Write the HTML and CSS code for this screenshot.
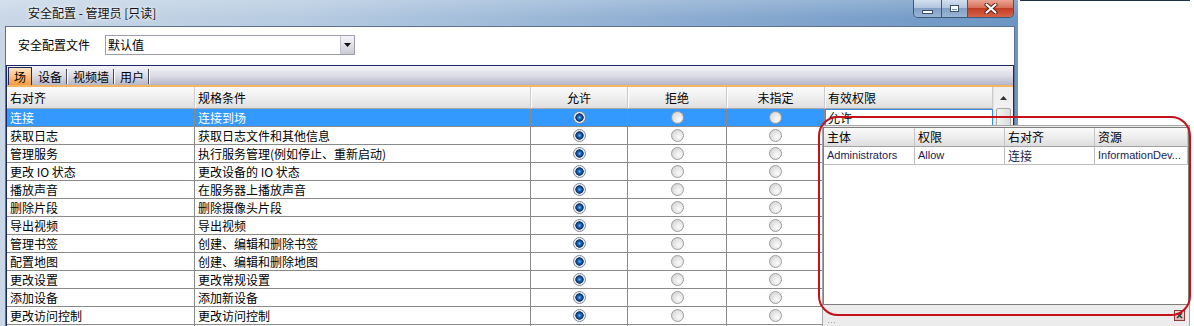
FILE: index.html
```html
<!DOCTYPE html>
<html lang="zh-CN">
<head>
<meta charset="utf-8">
<title>安全配置 - 管理员 [只读]</title>
<link rel="stylesheet" href="styles.css">
</head>
<body>
<div class="window">
  <div class="titlebar">
    <span class="title">安全配置 - 管理员 [只读]</span>
    <div class="caption">
      <div class="cbtn min"><span class="min-glyph"></span></div>
      <div class="cbtn max"><span class="max-glyph"></span></div>
      <div class="cbtn close">
        <svg width="14" height="11" viewBox="0 0 14 11"><path d="M2.5 1.5 L11.5 9.5 M11.5 1.5 L2.5 9.5" stroke="#5a1d12" stroke-width="4" stroke-linecap="round"/><path d="M2.5 1.5 L11.5 9.5 M11.5 1.5 L2.5 9.5" stroke="#ffffff" stroke-width="2.2" stroke-linecap="round"/></svg>
      </div>
    </div>
  </div>
  <div class="client">
    <div class="profile-row">
      <span class="label">安全配置文件</span>
      <div class="combo">
        <span class="combo-text">默认值</span>
        <span class="combo-btn"><svg width="7" height="4" viewBox="0 0 7 4"><path d="M0 0 H7 L3.5 4 Z" fill="#111"/></svg></span>
      </div>
    </div>
    <div class="tabctl">
      <div class="tabstrip">
        <span class="tab active">场</span>
        <span class="tab">设备</span>
        <span class="tab">视频墙</span>
        <span class="tab">用户</span>
      </div>
      <div class="tablebox">
        <div class="grid">
          <div class="row head">
            <div class="cell">右对齐</div>
            <div class="cell">规格条件</div>
            <div class="cell c">允许</div>
            <div class="cell c">拒绝</div>
            <div class="cell c">未指定</div>
            <div class="cell">有效权限</div>
          </div>
          <div class="row sel">
            <div class="cell">连接</div><div class="cell">连接到场</div>
            <div class="cell r"><span class="radio on"></span></div><div class="cell r"><span class="radio"></span></div><div class="cell r"><span class="radio"></span></div>
            <div class="cell eff">允许</div>
          </div>
          <div class="row">
            <div class="cell">获取日志</div><div class="cell">获取日志文件和其他信息</div>
            <div class="cell r"><span class="radio on"></span></div><div class="cell r"><span class="radio"></span></div><div class="cell r"><span class="radio"></span></div>
            <div class="cell"></div>
          </div>
          <div class="row">
            <div class="cell">管理服务</div><div class="cell">执行服务管理(例如停止、重新启动)</div>
            <div class="cell r"><span class="radio on"></span></div><div class="cell r"><span class="radio"></span></div><div class="cell r"><span class="radio"></span></div>
            <div class="cell"></div>
          </div>
          <div class="row">
            <div class="cell">更改 IO 状态</div><div class="cell">更改设备的 IO 状态</div>
            <div class="cell r"><span class="radio on"></span></div><div class="cell r"><span class="radio"></span></div><div class="cell r"><span class="radio"></span></div>
            <div class="cell"></div>
          </div>
          <div class="row">
            <div class="cell">播放声音</div><div class="cell">在服务器上播放声音</div>
            <div class="cell r"><span class="radio on"></span></div><div class="cell r"><span class="radio"></span></div><div class="cell r"><span class="radio"></span></div>
            <div class="cell"></div>
          </div>
          <div class="row">
            <div class="cell">删除片段</div><div class="cell">删除摄像头片段</div>
            <div class="cell r"><span class="radio on"></span></div><div class="cell r"><span class="radio"></span></div><div class="cell r"><span class="radio"></span></div>
            <div class="cell"></div>
          </div>
          <div class="row">
            <div class="cell">导出视频</div><div class="cell">导出视频</div>
            <div class="cell r"><span class="radio on"></span></div><div class="cell r"><span class="radio"></span></div><div class="cell r"><span class="radio"></span></div>
            <div class="cell"></div>
          </div>
          <div class="row">
            <div class="cell">管理书签</div><div class="cell">创建、编辑和删除书签</div>
            <div class="cell r"><span class="radio on"></span></div><div class="cell r"><span class="radio"></span></div><div class="cell r"><span class="radio"></span></div>
            <div class="cell"></div>
          </div>
          <div class="row">
            <div class="cell">配置地图</div><div class="cell">创建、编辑和删除地图</div>
            <div class="cell r"><span class="radio on"></span></div><div class="cell r"><span class="radio"></span></div><div class="cell r"><span class="radio"></span></div>
            <div class="cell"></div>
          </div>
          <div class="row">
            <div class="cell">更改设置</div><div class="cell">更改常规设置</div>
            <div class="cell r"><span class="radio on"></span></div><div class="cell r"><span class="radio"></span></div><div class="cell r"><span class="radio"></span></div>
            <div class="cell"></div>
          </div>
          <div class="row">
            <div class="cell">添加设备</div><div class="cell">添加新设备</div>
            <div class="cell r"><span class="radio on"></span></div><div class="cell r"><span class="radio"></span></div><div class="cell r"><span class="radio"></span></div>
            <div class="cell"></div>
          </div>
          <div class="row">
            <div class="cell">更改访问控制</div><div class="cell">更改访问控制</div>
            <div class="cell r"><span class="radio on"></span></div><div class="cell r"><span class="radio"></span></div><div class="cell r"><span class="radio"></span></div>
            <div class="cell"></div>
          </div>
          <div class="row">
            <div class="cell"></div><div class="cell"></div>
            <div class="cell r"></div><div class="cell r"></div><div class="cell r"></div>
            <div class="cell"></div>
          </div>
        </div>
        <div class="vscroll">
          <div class="sb-up"><svg width="7" height="4" viewBox="0 0 7 4"><path d="M0 4 H7 L3.5 0 Z" fill="#333"/></svg></div>
          <div class="thumb"></div>
        </div>
      </div>
    </div>
  </div>
</div>
<div class="desk"><div class="desk-line"></div></div>

<div class="popup">
  <div class="plist">
    <div class="prow phead">
      <div class="pc">主体</div><div class="pc">权限</div><div class="pc">右对齐</div><div class="pc">资源</div>
    </div>
    <div class="prow pdata">
      <div class="pc lat">Administrators</div><div class="pc lat">Allow</div><div class="pc">连接</div><div class="pc lat">InformationDev...</div>
    </div>
  </div>
  <div class="pbar">
    <svg class="grip" width="8" height="6" viewBox="0 0 8 6"><g fill="#a8a8a8"><rect x="0" y="0" width="1" height="1"/><rect x="3" y="0" width="1" height="1"/><rect x="6" y="0" width="1" height="1"/><rect x="0" y="4" width="1" height="1"/><rect x="3" y="4" width="1" height="1"/><rect x="6" y="4" width="1" height="1"/></g></svg>
    <div class="pclose"><svg width="9" height="9" viewBox="0 0 9 9"><path d="M2 2 L7 7 M7 2 L2 7" stroke="#3a3a3a" stroke-width="1.6"/></svg></div>
  </div>
</div>
<div class="annot"></div>
</body>
</html>
```

FILE: styles.css
```css
html, body {
  margin: 0;
  padding: 0;
}
body {
  width: 1194px;
  height: 326px;
  overflow: hidden;
  display: flex;
  position: relative;
  background: #ffffff;
  font-family: "Noto Sans CJK SC", "Liberation Sans", sans-serif;
  font-size: 12px;
  color: #000;
}

/* ---------- window frame ---------- */
.window {
  width: 1018px;
  flex: none;
  height: 326px;
  display: flex;
  flex-direction: column;
  background: linear-gradient(90deg, #c9d7e6 0%, #b6cbe1 30%, #8eaed2 65%, #6b95c4 100%);
}
.titlebar {
  height: 26px;
  flex: none;
  display: flex;
  align-items: flex-start;
  background: linear-gradient(180deg, rgba(255,255,255,0.2), rgba(255,255,255,0) 70%);
}
.title {
  flex: 1;
  margin: 5px 0 0 28px;
  line-height: 15px;
  color: #121212;
  text-shadow: 0 0 6px rgba(255,255,255,0.95), 0 0 3px rgba(255,255,255,0.8);
}
.caption {
  display: flex;
  height: 17px;
  margin-right: 4px;
  border: 1px solid #3e5878;
  border-top: none;
  border-radius: 0 0 5px 5px;
  overflow: hidden;
}
.cbtn {
  display: flex;
  align-items: center;
  justify-content: center;
}
.cbtn + .cbtn {
  border-left: 1px solid #3e5878;
}
.min, .max {
  background: linear-gradient(180deg, #d3e0ee 0%, #b1c6de 45%, #839fc4 50%, #9ab6d6 100%);
}
.min { width: 27px; }
.max { width: 25px; }
.close {
  width: 45px;
  background: linear-gradient(180deg, #eba595 0%, #d8705a 45%, #c23d24 50%, #d6644a 100%);
}
.min-glyph {
  width: 9px;
  height: 2px;
  margin-top: 6px;
  background: #fff;
  border: 1px solid #3b4f69;
}
.max-glyph {
  width: 7px;
  height: 5px;
  border: 1px solid #3b4f69;
  box-shadow: inset 0 0 0 1px #fff, inset 0 2px 0 1px #fff;
  background: #6f8fb5;
}

/* ---------- client ---------- */
.client {
  flex: 1;
  min-height: 0;
  margin: 0 3px 0 5px;
  background: #fff;
  border: 1px solid #5d7290;
  border-bottom: none;
  display: flex;
  flex-direction: column;
}
.profile-row {
  height: 20px;
  margin-top: 8px;
  padding-left: 12px;
  display: flex;
  align-items: center;
}
.label {
  width: 72px;
  margin-right: 15px;
  line-height: 20px;
}
.combo {
  width: 250px;
  height: 20px;
  box-sizing: border-box;
  border: 1px solid #9d9db0;
  display: flex;
}
.combo-text {
  flex: 1;
  padding-left: 2px;
  line-height: 18px;
}
.combo-btn {
  width: 13px;
  border-left: 1px solid #c2c2d0;
  background: linear-gradient(180deg, #f6f6f9, #cacad6);
  display: flex;
  align-items: center;
  justify-content: center;
}

/* ---------- tab control ---------- */
.tabctl {
  flex: 1;
  min-height: 0;
  margin-top: 10px;
  border: 1px solid #1b2868;
  border-bottom: none;
  display: flex;
  flex-direction: column;
}
.tabstrip {
  height: 19px;
  flex: none;
  display: flex;
  align-items: flex-end;
  padding-left: 1px;
  background: linear-gradient(180deg, #f4f4f8 0%, #dcdce6 50%, #b5b5c9 100%);
  border-bottom: 2px solid #f6b360;
}
.tab {
  height: 15px;
  line-height: 15px;
  padding: 0 4px 0 6px;
  margin-bottom: 1px;
  border-right: 1px solid #4a4a55;
  box-shadow: 1px 0 0 #ffffff;
}
.tab.active {
  width: 22px;
  height: 17px;
  line-height: 17px;
  margin-bottom: 0;
  padding: 0;
  text-align: center;
  border: 1px solid #1b2868;
  border-bottom: none;
  box-shadow: none;
  background: linear-gradient(180deg, #fde2bd 0%, #fbc17f 50%, #f39a3c 100%);
}

.tablebox {
  flex: 1;
  min-height: 0;
  display: flex;
  overflow: hidden;
}
.grid {
  width: 986px;
  flex: none;
}
.row {
  display: grid;
  grid-template-columns: 188px 336px 97px 99px 98px 168px;
  height: 18px;
}
.cell {
  box-sizing: border-box;
  border-right: 1px solid #8a8a8a;
  border-bottom: 1px solid #8a8a8a;
  padding-left: 3px;
  line-height: 17px;
  white-space: nowrap;
  overflow: hidden;
}
.cell.c { text-align: center; padding-left: 0; }
.cell.r {
  display: flex;
  align-items: center;
  justify-content: center;
  padding-left: 0;
}
.row.head { height: 22px; }
.row.head .cell {
  line-height: 21px;
  border-right: 1px solid #cbcbcb;
  border-bottom: 1px solid #a8a8a8;
  box-shadow: inset 1px 0 0 #ffffff;
  background: linear-gradient(180deg, #fbfbfb 0%, #ececec 60%, #dedede 100%);
}
.row.sel .cell {
  background: #3399ff;
  color: #fff;
}
.row.sel .cell.eff {
  background: #fff;
  color: #000;
  border: 1px solid #3a8ee6;
  line-height: 16px;
  padding-left: 2px;
}

.radio {
  width: 13px;
  height: 13px;
  box-sizing: border-box;
  border-radius: 50%;
  border: 1px solid #9c9c9c;
  background: radial-gradient(circle at 7px 7px, #fbfbfb 0%, #e9e9e9 40%, #cdcdcd 100%);
}
.radio.on {
  border-color: #7d8a99;
  background: radial-gradient(circle at 5.5px 5.5px, #7cc2f5 0px, #2370c2 1.5px, #0b3f82 3.2px, #132f58 3.9px, #dde3ea 4.4px, #f8f8f8 5.5px);
}

.vscroll {
  flex: 1;
  display: flex;
  flex-direction: column;
  background: #f0f0f0;
  border-left: 1px solid #e3e3e3;
}
.sb-up {
  height: 21px;
  flex: none;
  display: flex;
  align-items: center;
  justify-content: center;
}
.thumb {
  flex: 1;
  margin: 0 2px;
  border: 1px solid #a9a9a9;
  border-radius: 2px;
  background: linear-gradient(90deg, #f4f4f4, #dcdcdc);
}

/* ---------- right desktop area ---------- */
.desk {
  flex: 1;
  padding: 0 4px 0 2px;
}
.desk-line {
  height: 1px;
  background: #1f3149;
}

/* ---------- popup (overlay) ---------- */
.popup {
  position: absolute;
  left: 822px;
  top: 125px;
  width: 368px;
  height: 210px;
  box-sizing: border-box;
  border: 1px solid #a6a6a6;
  padding-top: 1px;
  background: #ececec;
  display: flex;
  flex-direction: column;
}
.plist {
  height: 178px;
  flex: none;
  box-sizing: border-box;
  border: 1px solid #7e7e7e;
  background: #fff;
}
.prow {
  display: grid;
  grid-template-columns: 91px 90px 90px 1fr;
}
.pc {
  box-sizing: border-box;
  padding-left: 3px;
  white-space: nowrap;
  overflow: hidden;
}
.phead { height: 19px; }
.phead .pc {
  line-height: 18px;
  border-right: 1px solid #c4c4c4;
  border-bottom: 1px solid #a2a2a2;
  background: linear-gradient(180deg, #fafafa 0%, #ebebeb 60%, #dddddd 100%);
}
.pdata { height: 18px; }
.pdata .pc {
  line-height: 17px;
  color: #1c1c50;
  border-right: 1px solid #bdbdbd;
  border-bottom: 1px solid #bdbdbd;
}
.pc.lat {
  font-family: "Liberation Sans", sans-serif;
  font-size: 11px;
}
.pbar {
  flex: 1;
  display: flex;
  justify-content: space-between;
  align-items: flex-start;
  padding: 5px 4px 0 5px;
}
.grip { margin-top: 12px; }
.pclose {
  width: 11px;
  height: 11px;
  box-sizing: border-box;
  border: 1px solid #8d3a3a;
  background: linear-gradient(180deg, #f3e3e3, #d7b9b9);
  display: flex;
  align-items: center;
  justify-content: center;
}

/* ---------- red annotation ---------- */
.annot {
  position: absolute;
  left: 818px;
  top: 116px;
  width: 373px;
  height: 200px;
  box-sizing: border-box;
  border: 2px solid #c4121c;
  border-radius: 20px;
  pointer-events: none;
}
```
